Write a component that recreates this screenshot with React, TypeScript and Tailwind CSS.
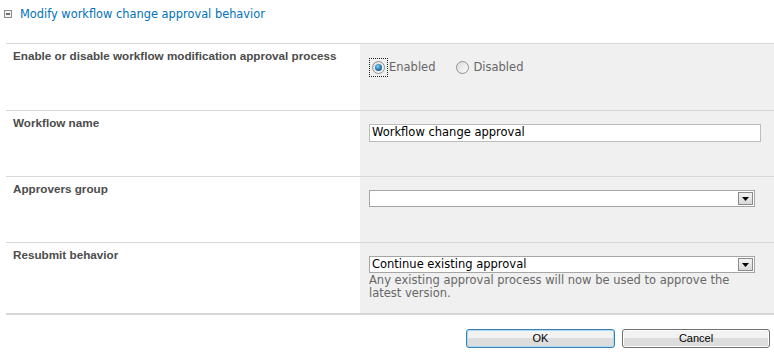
const verdana = "font-['DejaVu_Sans',Verdana,sans-serif]";

const Radio = ({ checked, label, focused }: { checked?: boolean; label: string; focused?: boolean }) => (
  <label className="flex items-center text-[11.5px] text-[#676767]">
    <span
      className={`flex h-[19px] w-[19px] items-center justify-center ${
        focused ? "outline outline-1 outline-dotted outline-[#222] -outline-offset-1" : ""
      }`}
    >
      <span className="flex h-[13px] w-[13px] items-center justify-center rounded-full border border-[#8e8f8f] bg-gradient-to-br from-[#dcdcdc] to-[#fbfbfb]">
        {checked && (
          <span className="h-[7px] w-[7px] rounded-full bg-[radial-gradient(circle_at_40%_35%,#7fd0f3,#1b6ea8_60%,#0d4a7a)]" />
        )}
      </span>
    </span>
    <span className="ml-[1px]">{label}</span>
  </label>
);

const DropArrow = () => (
  <span className="flex h-[13px] w-[15px] items-center justify-center border border-[#8a8a8a] bg-gradient-to-b from-[#f2f2f2] to-[#d9d9d9]">
    <svg width="7" height="4" viewBox="0 0 7 4">
      <path d="M0 0h7L3.5 4z" fill="#000" />
    </svg>
  </span>
);

const Select = ({ value }: { value?: string }) => (
  <div className="flex h-[17px] w-[386px] items-center justify-between border border-[#a5a5a5] bg-white pl-[2px] pr-[1px]">
    <span className="text-[11.5px] leading-none text-black">{value}</span>
    <DropArrow />
  </div>
);

const labelCls =
  "pl-[7px] pt-[5px] text-[11.7px] font-bold leading-[13px] text-[#4c4c4c] font-['Liberation_Sans',Arial,sans-serif]";

const Row = ({ label, children, h }: { label: string; children: React.ReactNode; h: string }) => (
  <div className={`grid grid-cols-[354px_1fr] border-b border-[#d8d8d8] ${h}`}>
    <div className={labelCls}>{label}</div>
    <div className="bg-[#f0f0f0] pl-[9px] pr-[13px]">{children}</div>
  </div>
);

const App = () => (
  <div className={`h-[353px] w-[774px] bg-white ${verdana}`}>
    <div className="flex items-center pl-[4px] pt-[7px]">
      <span className="flex h-[8px] w-[8px] items-center justify-center border border-[#8c8c8c] bg-[#f4f4f4]">
        <span className="h-[2px] w-[4px] bg-[#6d6d6d]" />
      </span>
      <span className="ml-[8px] text-[11.4px] leading-[14px] text-[#0072bc]">
        Modify workflow change approval behavior
      </span>
    </div>

    <div className="ml-[6px] mt-[22px] border-t border-[#d8d8d8]">
      <Row label="Enable or disable workflow modification approval process" h="h-[67px]">
        <div className="flex items-center gap-[18px] pt-[14px]">
          <Radio checked focused label="Enabled" />
          <Radio label="Disabled" />
        </div>
      </Row>
      <Row label="Workflow name" h="h-[66px]">
        <div className="pt-[13px]">
          <div className="flex h-[18px] w-[392px] items-center border border-[#bcbcbc] bg-white pl-[2px] text-[11.5px] text-black">
            Workflow change approval
          </div>
        </div>
      </Row>
      <Row label="Approvers group" h="h-[66px]">
        <div className="pt-[13px]">
          <Select />
        </div>
      </Row>
      <div className="grid h-[72px] grid-cols-[354px_1fr] border-b-2 border-[#d6d6d6]">
        <div className={labelCls}>Resubmit behavior</div>
        <div className="bg-[#f0f0f0] pl-[9px] pr-[13px] pt-[13px]">
          <Select value="Continue existing approval" />
          <p className="mt-[1px] w-[372px] text-[11.5px] leading-[13px] text-[#676767]">
            Any existing approval process will now be used to approve the latest version.
          </p>
        </div>
      </div>
    </div>

    <div className="flex justify-end gap-[7px] pr-[4px] pt-[14px]">
      <button className="h-[19px] w-[149px] rounded-[3px] border border-[#3c7fb1] bg-gradient-to-b from-[#f2f2f2] from-50% to-[#dddddd] to-50% text-[11px] text-black font-['Liberation_Sans',Arial,sans-serif] shadow-[inset_0_0_0_1px_#a6dbf5]">
        OK
      </button>
      <button className="h-[19px] w-[148px] rounded-[3px] border border-[#707070] bg-gradient-to-b from-[#f2f2f2] from-50% to-[#dddddd] to-50% text-[11px] text-black font-['Liberation_Sans',Arial,sans-serif] shadow-[inset_0_0_0_1px_#fcfcfc]">
        Cancel
      </button>
    </div>
  </div>
);

export default App;
